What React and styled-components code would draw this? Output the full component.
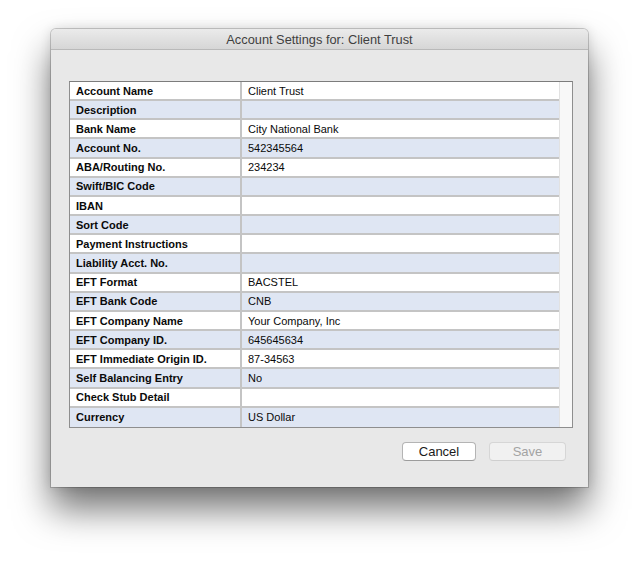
import React from "react";
import styled, { createGlobalStyle } from "styled-components";

const GlobalStyle = createGlobalStyle`
  body {
    margin: 0;
    background: #ffffff;
    font-family: "Liberation Sans", Arial, sans-serif;
  }
`;

const Stage = styled.div`
  width: 640px;
  height: 561px;
  padding: 29px 0 0 51px;
  box-sizing: border-box;
`;

const Window = styled.div`
  width: 537px;
  height: 458px;
  background: #e8e8e8;
  border-radius: 5px 5px 0 0;
  box-shadow: 0 22px 36px rgba(0, 0, 0, 0.55), 0 0 12px rgba(0, 0, 0, 0.12),
    0 0 0 1px rgba(0, 0, 0, 0.18);
  display: flex;
  flex-direction: column;
`;

const TitleBar = styled.div`
  height: 20px;
  border-radius: 5px 5px 0 0;
  background: linear-gradient(#ebebeb, #d6d6d6);
  border-bottom: 1px solid #b9b9b9;
  display: flex;
  align-items: center;
  justify-content: center;
  font-size: 12.8px;
  color: #3f3f3f;
`;

const Body = styled.div`
  flex: 1;
  padding: 31px 15px 0 18px;
  display: flex;
  flex-direction: column;
`;

const Frame = styled.div`
  height: 345px;
  border: 1px solid #8e8e8e;
  border-top-color: #7c7c7c;
  display: flex;
  background: #ffffff;
`;

const Rows = styled.div`
  width: 489px;
  display: grid;
  grid-template-rows: repeat(18, 1fr);
`;

const Row = styled.div`
  display: grid;
  grid-template-columns: 172px 1fr;
  background: ${(p) => (p.$alt ? "#dfe6f3" : "#ffffff")};
  border-bottom: 2px solid #c4c4c4;
  font-size: 11px;
  color: #0a0a0a;

  &:last-child {
    border-bottom: none;
  }
`;

const Cell = styled.div`
  display: flex;
  align-items: center;
  padding-left: 6px;
  font-weight: ${(p) => (p.$label ? 700 : 400)};
  border-right: ${(p) => (p.$label ? "2px solid #c4c4c4" : "none")};
  white-space: nowrap;
`;

const ScrollTrack = styled.div`
  flex: 1;
  background: #f8f8f8;
  border-left: 1px solid #e2e2e2;
`;

const Buttons = styled.div`
  display: flex;
  justify-content: flex-end;
  gap: 13px;
  margin-top: 14px;
  padding-right: 7px;
`;

const Button = styled.button`
  width: ${(p) => p.$w}px;
  height: 19px;
  padding: 0;
  border-radius: 4px;
  font-family: inherit;
  font-size: 13px;
  background: ${(p) => (p.disabled ? "#f1f1f1" : "#ffffff")};
  color: ${(p) => (p.disabled ? "#a3a3a3" : "#1a1a1a")};
  border: 1px solid ${(p) => (p.disabled ? "#d6d6d6" : "#b4b4b4")};
  border-bottom-color: ${(p) => (p.disabled ? "#cfcfcf" : "#9c9c9c")};
`;

const fields = [
  ["Account Name", "Client Trust"],
  ["Description", ""],
  ["Bank Name", "City National Bank"],
  ["Account No.", "542345564"],
  ["ABA/Routing No.", "234234"],
  ["Swift/BIC Code", ""],
  ["IBAN", ""],
  ["Sort Code", ""],
  ["Payment Instructions", ""],
  ["Liability Acct. No.", ""],
  ["EFT Format", "BACSTEL"],
  ["EFT Bank Code", "CNB"],
  ["EFT Company Name", "Your Company, Inc"],
  ["EFT Company ID.", "645645634"],
  ["EFT Immediate Origin ID.", "87-34563"],
  ["Self Balancing Entry", "No"],
  ["Check Stub Detail", ""],
  ["Currency", "US Dollar"],
];

export default function App() {
  return (
    <Stage>
      <GlobalStyle />
      <Window>
        <TitleBar>Account Settings for: Client Trust</TitleBar>
        <Body>
          <Frame>
            <Rows>
              {fields.map(([label, value], i) => (
                <Row key={label} $alt={i % 2 === 1}>
                  <Cell $label>{label}</Cell>
                  <Cell>{value}</Cell>
                </Row>
              ))}
            </Rows>
            <ScrollTrack />
          </Frame>
          <Buttons>
            <Button $w={74}>Cancel</Button>
            <Button $w={77} disabled>
              Save
            </Button>
          </Buttons>
        </Body>
      </Window>
    </Stage>
  );
}
